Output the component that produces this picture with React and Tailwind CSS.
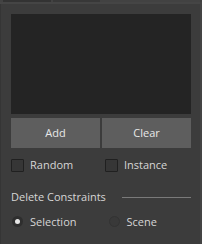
import React from "react";

function Check({ label }) {
  return (
    <div className="flex items-center gap-[6px]">
      <div className="w-[13px] h-[13px] border border-[#202020] bg-[#363636] rounded-[1px]" />
      <span>{label}</span>
    </div>
  );
}

function Radio({ label, on }) {
  return (
    <div className="flex items-center gap-[7px]">
      <div className={"w-[11px] h-[11px] rounded-full flex items-center justify-center " + (on ? "bg-[#2e2e2e]" : "bg-[#393939] border border-[#333]")}>
        {on && <div className="w-[5px] h-[5px] rounded-full bg-[#e6e6e6]" />}
      </div>
      <span>{label}</span>
    </div>
  );
}

export default function App() {
  return (
    <div className="w-[202px] h-[244px] bg-[#3c3c3c] flex flex-col text-[11px] text-[#d6d6d6] overflow-hidden" style={{ fontFamily: '"Open Sans", "Noto Sans", sans-serif' }}>
      <div className="h-[2px] bg-[#424242] flex gap-[2px] pl-[3px]">
        <div className="w-[48px] bg-[#333333]" />
        <div className="w-[47px] bg-[#383838]" />
      </div>
      <div className="h-[2px] bg-[#454545]" />
      <div className="flex-1 flex">
        <div className="w-[1px] bg-[#353535]" />
        <div className="flex-1 flex flex-col pl-[10px] pr-[9px] pt-[10px]">
          <div className="h-[100px] bg-[#242424]" />
          <div className="mt-[4px] flex gap-[2px] h-[30px]">
            <div className="flex-1 bg-[#5e5e5e] flex items-center justify-center text-[#e8e8e8]">Add</div>
            <div className="flex-1 bg-[#5e5e5e] flex items-center justify-center text-[#e8e8e8]">Clear</div>
          </div>
          <div className="mt-[9px] grid grid-cols-2 h-[14px] items-center">
            <Check label="Random" />
            <div className="pl-[4px]"><Check label="Instance" /></div>
          </div>
          <div className="mt-[18px] flex items-center gap-[16px]">
            <span>Delete Constraints</span>
            <div className="flex-1 h-[1px] bg-[#7a7a7a]" />
          </div>
          <div className="mt-[8px] grid grid-cols-2 items-center pl-[1px]">
            <Radio label="Selection" on />
            <div className="pl-[7px]"><Radio label="Scene" /></div>
          </div>
        </div>
        <div className="w-[2px] bg-[#444]" />
      </div>
    </div>
  );
}
